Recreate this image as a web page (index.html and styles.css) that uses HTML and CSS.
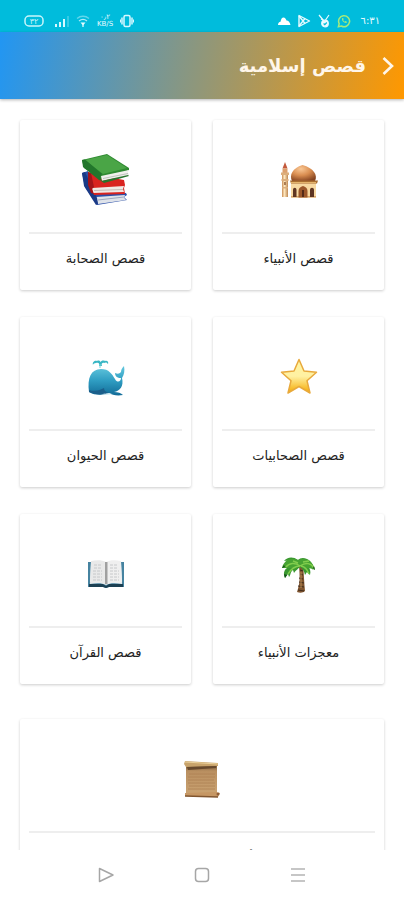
FILE: index.html
```
<!DOCTYPE html>
<html lang="ar" dir="rtl">
<head>
<meta charset="UTF-8">
<meta name="viewport" content="width=device-width,initial-scale=1.0">
<title>قصص إسلامية</title>
<link rel="stylesheet" href="styles.css">
</head>
<body>
<div class="status">
<span class="time">٦:٣١</span>
<svg width="14" height="14" viewBox="0 0 14 14" fill="none" stroke="#a5ea7c" stroke-width="1.5"><path d="M1.4 12.7l.8-3A5.5 5.5 0 1 1 4.400 12z"/><path d="M5 4.300c-.5 2.300 2 5 4.500 4.700l.4-1.300-1.500-.7-.7.7c-.8-.4-1.300-1-1.600-1.700l.6-.7-.6-1.300z" fill="#a5ea7c" stroke="none"/></svg>
<svg width="14" height="14" viewBox="0 0 14 14" fill="none" stroke="#e8fbff" stroke-width="1.200"><path d="M2 1l5 6M12 1L8.500 6M4 5l2 1"/><circle cx="8" cy="9.500" r="3.300" fill="#e8fbff"/><path d="M6.600 9.500l1.200 1.200 2-2.200" stroke="#00bcdc"/></svg>
<svg width="14" height="14" viewBox="0 0 14 14" fill="none" stroke="#e8fbff" stroke-width="1.400"><path d="M2 1.500v11L12.500 7z" stroke-linejoin="round"/><path d="M2 2l6 7.500M2 12l6-7.500"/></svg>
<svg width="14" height="14" viewBox="0 0 14 14" fill="#fff"><path d="M1 11c0-2 1-3 2.500-3.200C4 5 5 3.500 6.500 3.500S9 5 9.500 6.500c2 0 3.500 2 4 4.500z"/></svg>
<span class="space"></span>
<svg width="14" height="14" viewBox="0 0 14 14" fill="none" stroke="#d8f8ff" stroke-width="1.500"><rect x="4" y="1.500" width="6" height="11" rx="1.500"/><path d="M2 3.500v7M12 3.500v7"/><path d="M.5 5.500v3M13.500 5.500v3" stroke-width="1"/></svg>
<span class="speed"><span>٠٫٢</span><span>KB/S</span></span>
<svg width="14" height="14" viewBox="0 0 14 14" fill="none" stroke="#d8f8ff" stroke-width="1.300"><path d="M1 4.500c3.500-3 8.500-3 12 0" opacity=".45"/><path d="M3 7c2.300-1.800 5.700-1.800 8 0" opacity=".8"/><path d="M4.500 8.500h5L7 11.500z" fill="#e8fbff" stroke="none"/><path d="M7 10v3"/></svg>
<svg width="16" height="14" viewBox="0 0 16 14" fill="#d8f8ff"><path d="M1 10h2v3H1zM5 8h2v5H5zM9 5h2v8H9z"/><path d="M13 2h2v11h-2z" opacity=".25"/></svg>
<svg class="battery" width="20" height="14" viewBox="0 0 20 14"><rect x="1" y="2" width="18" height="10" rx="4" fill="none" stroke="#c8f5fa" stroke-width="1.500"/><text x="10" y="10" font-size="8" text-anchor="middle" fill="#c8f5fa">٣٢</text></svg>
</div>
<header class="bar">
<button class="back" type="button" aria-label="رجوع"><svg width="14" height="22" viewBox="0 0 14 22" fill="none" stroke="#fff6ea" stroke-width="2.600"><path d="M2.500 3l8.500 8-8.500 8"/></svg></button>
<h1>قصص إسلامية</h1>
</header>
<main class="content">
<div class="grid">
<a class="card" href="#prophets">
<span class="icon"><svg width="40" height="40" viewBox="0 0 40 40">
<defs>
<radialGradient id="dome" cx=".4" cy=".25" r=".8"><stop offset="0" stop-color="#f9c795"/><stop offset=".5" stop-color="#d98d50"/><stop offset="1" stop-color="#854421"/></radialGradient>
<linearGradient id="tower"><stop offset="0" stop-color="#c98d54"/><stop offset=".4" stop-color="#ffe8bf"/><stop offset="1" stop-color="#bd8751"/></linearGradient>
</defs>
<path d="M6 2l2.500 6.500h-5z" fill="#c3593c"/><path d="M3.500 8.500h5V13h-5z" fill="#dca06d"/><path d="M3 14h6v23H3z" fill="url(#tower)"/><path d="M2 12.500h8V15H2zM2.500 19h7v2h-7zM3 27h6v1.500H3z" fill="#dcae7c"/><path d="M5.200 22h1.500v3H5.200z" fill="#946137"/>
<path d="M12 23h25v14.500H12z" fill="#f8d9a2"/><path d="M12 36h25v1.500H12z" fill="#d8a467"/>
<path d="M13 21c-3-6 .5-13 10.500-16 11 3 15.500 10 12.500 16z" fill="url(#dome)"/>
<path d="M11 20.500h28l-1 3H12z" fill="#a96d30"/><path d="M12 22h25v1H12z" fill="#e4b46c"/>
<path d="M19.500 37.500V31c0-3 2-4 4.500-5 2.500 1 4.500 2 4.500 5v6.500z" fill="#9a562a"/><path d="M23 30h2v7h-2z" fill="#542a18"/>
<path d="M14 37v-7c0-3 3.500-3 3.500 0v7zM31 37v-7c0-3 4-3 4 0v7z" fill="#5e3522"/></svg></span>
<span class="label">قصص الأنبياء</span>
</a>
<a class="card" href="#companions">
<span class="icon"><svg width="52" height="52" viewBox="0 0 52 52">
<path d="M2 19l6-2 10 20 28 2 1 2-3 2 3 3-30 5L5 33z" fill="#2b4fa8"/><path d="M16 43l29-2-1 2.500 2 2.500-28 4z" fill="#dfe3ea"/><path d="M18 46l26-3" stroke="#8d99b4" stroke-width=".8"/><path d="M2 19l3-1 12 26 1 6-2 1L4 32z" fill="#1a3a86"/>
<path d="M8 18l14 4 22 4 1 5-1 3 1 6-31 1-4-8z" fill="#d9231f"/><path d="M12 34l32-2-1 3 1 3-31 1z" fill="#f0e9e5"/><path d="M14 36.500l29-1" stroke="#b5a8a4" stroke-width=".7"/><path d="M8 18l3 1 3 14-2 2 2 5-3-1-3-8z" fill="#a3141a"/>
<path d="M2 6L27 0l22 14v2L23 26 4 14z" fill="#2f8a31"/><path d="M5 6L27 1l20 13-24 6z" fill="#4aa546"/><path d="M21 22l28-6-1 2 1 3-27 6z" fill="#f0f0ec"/><path d="M23 24.500l25-5" stroke="#b0b5ad" stroke-width=".8"/><path d="M2 6l3-.5L22 20l-2 3 2 4-3-1L3 13z" fill="#22762c"/><path d="M21 27l27-6 1 1-25 7z" fill="#29742c"/></svg></span>
<span class="label">قصص الصحابة</span>
</a>
<a class="card" href="#women">
<span class="icon"><svg width="40" height="40" viewBox="0 0 40 40">
<defs><linearGradient id="star" x2="0" y2="1"><stop offset="0" stop-color="#fff4a0"/><stop offset=".5" stop-color="#fff1a2"/><stop offset="1" stop-color="#f5a900"/></linearGradient></defs>
<path d="M20 2.500l5 11.500 12.500 1.200-9.500 8.500 3 12.300L20 29.500 9 36l3-12.300-9.500-8.500L15 14z" fill="url(#star)" stroke="#e8a93c" stroke-width="1.500" stroke-linejoin="round"/></svg></span>
<span class="label">قصص الصحابيات</span>
</a>
<a class="card" href="#animals">
<span class="icon"><svg width="40" height="40" viewBox="0 0 40 40">
<defs><linearGradient id="whale" x2="0" y2="1"><stop offset="0" stop-color="#64c8de"/><stop offset=".5" stop-color="#2f9dc2"/><stop offset="1" stop-color="#126c98"/></linearGradient></defs>
<path d="M13 9c1-3-1-4-3-3-2 0-3 1-3 2-1-3 2-5 4-4 2-1 3 0 3.500 1C15 4 17 3 19 4c2-1 4 1 3 3-1-1-2-2-3-1-3-1-4 1-3 3z" fill="#38b6c4"/>
<path d="M14 7v4" stroke="#79d6dc"/>
<path d="M3 35C1 21 5 12 15 12c8 0 11 5 14 10 2 4 6 3 6-1-4 0-6-2-6-5 3 1 4 1 6-1 0-2 1-4 3-6 1 5 0 9-2 12 2 8-2 13-8 14 4 0 7 1 9 3-6 1-11 0-14-2-4 2-14 3-20-1z" fill="url(#whale)"/>
<path d="M3 33c7 2 11 0 15-2 0 3 2 4 5 5-6 2-14 2-20-1z" fill="#1b5f8b"/><path d="M15 37c5 0 6-1 8-1l3 1c-4 1-8 1-11 0z" fill="#c7e4ed"/></svg></span>
<span class="label">قصص الحيوان</span>
</a>
<a class="card" href="#miracles">
<span class="icon"><svg width="40" height="40" viewBox="0 0 40 40">
<path d="M20 12l4-1c1 9 1 17 2 26-2 2-5 2-8 1 3-8 3-15 2-26z" fill="#80552f"/><path d="M21 16l3 1M21 20l3 1M20 24l4 1M20 28l5 1M19 32l6 1M19 36l6 1" stroke="#3f2b1c"/><path d="M22 18v16" stroke="#b88b54"/>
<path d="M21 12C17 7 9 6 3 14c3-1 4-1 5 0-3 2-4 6-2 10l3-4 1 3c2-2 1-5 4-7l1 3c2-3 4-4 6-6 3 2 4 4 5 8l2-3 3 3c1-4 0-6-2-9 3 0 4 2 5 4 1-5-2-9-6-11-4-2-7-1-9 1-5-4-11-3-14 1 5-1 10 0 14 5z" fill="#3a9830"/>
<path d="M3 14c2-8 9-11 16-8 7-3 15 0 17 10-4-2-8-2-10-1l-5-3-6 3c-3-1-6-1-12-1z" fill="#47a332"/>
<path d="M21 12C16 8 10 9 7 13M21 12c-6 0-9 3-12 8M21 12c6-4 11-3 14 2M22 12c5 1 7 5 8 8M19 9l-5-2M24 8l6-1" fill="none" stroke="#82cd4d" stroke-width="1.500"/><path d="M3 14l2-3 1 2zM6 24l-1-4 3 1zM36 16l-1-4-1 2z" fill="#164d1b"/></svg></span>
<span class="label">معجزات الأنبياء</span>
</a>
<a class="card" href="#quran">
<span class="icon"><svg width="40" height="40" viewBox="0 0 40 40">
<path d="M2 8h3l-1 20 13 1h6l13-1-1-20h3v25H23l-3 1-3-1H2z" fill="#4683a0"/><path d="M3 30h14l3 2 3-2h14v3H23l-3 1-3-1H3z" fill="#1c4053"/>
<path d="M5 7c6-1 11-1 15 1v23c-4-2-9-2-16-1z" fill="#e9e9e9"/><path d="M20 8c4-2 9-2 15-1l1 23c-7-1-12-1-16 1z" fill="#efefef"/><path d="M19 8h2.500v22H19z" fill="#a0a0a0"/>
<path d="M8 11h8M8 14h8M7 17h9M7 20h9M7 23h9M7 26h9M24 11h8M24 14h8M24 17h9M24 20h9M24 23h9M24 26h9" stroke="#c6c8ca" stroke-width="1" stroke-dasharray="3 1"/></svg></span>
<span class="label">قصص القرآن</span>
</a>
<a class="card wide" href="#events">
<span class="icon"><svg width="40" height="40" viewBox="0 0 40 40">
<defs><linearGradient id="paper" x2="0" y2="1"><stop offset="0" stop-color="#705436"/><stop offset=".2" stop-color="#b98f60"/><stop offset="1" stop-color="#cba473"/></linearGradient></defs>
<path d="M4 6h31v30H4z" fill="url(#paper)"/><path d="M3 2l33 2v3L4 8 2 5z" fill="#c8a36b"/><path d="M3 3l33 2" stroke="#ead09a"/><path d="M5 8l29-1v2L6 11z" fill="#67492d"/>
<path d="M7 15h26M6 18h27M6 21h26M6 24h27M7 27h26M6 30h27" stroke="#ad8253" stroke-width=".8"/>
<path d="M3 34l31-1 4 1-2 4-33-1z" fill="#c69764"/><path d="M3 37l33 1" stroke="#80552f" stroke-width="1.500"/><circle cx="36" cy="35" r="1.500" fill="#8f5e38"/></svg></span>
<span class="label">أحداث نهاية الزمان</span>
</a>
</div>
</main>
<nav class="keys">
<button type="button" aria-label="القائمة"><svg width="18" height="18" viewBox="0 0 18 18" fill="none" stroke="#b4b4b4" stroke-width="1.500"><path d="M2 3h14M2 9h14M2 15h14"/></svg></button>
<button type="button" aria-label="الرئيسية"><svg width="18" height="18" viewBox="0 0 18 18" fill="none" stroke="#a6a6a6" stroke-width="1.500"><rect x="2.500" y="2.500" width="13" height="13" rx="3"/></svg></button>
<button type="button" aria-label="السابق"><svg width="18" height="18" viewBox="0 0 18 18" fill="none" stroke="#a6a6a6" stroke-width="1.500" stroke-linejoin="round"><path d="M2.500 2.500v13L16 9z"/></svg></button>
</nav>
</body>
</html>
```
FILE: styles.css
```
*,*::before,*::after{margin:0;padding:0;box-sizing:border-box}
body{font-family:"DejaVu Sans",sans-serif;background:#fff;color:#333;height:100vh;display:flex;flex-direction:column;overflow:hidden}
svg{display:block;flex:none}
button{border:none;background:none;cursor:pointer}
.status{flex:none;display:flex;align-items:center;gap:6px;height:32px;padding:9px 24px 0;background:#00bcdc;color:#e8fbff}
.time{font-size:10px;line-height:14px;margin-left:4px}
.space{flex:1}
.speed{display:flex;flex-direction:column;align-items:center;width:18px;font-size:7px;line-height:7px}
.battery{margin-right:4px}
.bar{flex:none;display:flex;align-items:center;gap:14px;height:67px;padding:0 8px;background:linear-gradient(100deg,#2196f3,#ff9800);box-shadow:0 1px 3px rgba(0,0,0,.3);z-index:1}
.back{padding:4px 1px}
h1{font-size:18px;line-height:32px;font-weight:700;color:#fff6ea}
.content{flex:1;min-height:0;overflow:hidden}
.grid{display:grid;grid-template-columns:1fr 1fr;gap:27px 22px;padding:21px 20px}
.card{display:flex;flex-direction:column;height:170px;padding:0 9px;border-radius:2px;background:#fff;box-shadow:0 1px 3px rgba(0,0,0,.2);color:#222;text-decoration:none}
.icon{display:flex;align-items:center;justify-content:center;height:114px;padding-top:8px;border-bottom:2px solid #eee}
.label{padding-top:13px;font-size:13px;line-height:24px;text-align:center}
.wide{grid-column:1/-1;margin-top:8px}
.keys{flex:none;display:flex;align-items:center;justify-content:center;gap:70px;height:50px;background:#fff}
.keys button{padding:4px}
```
